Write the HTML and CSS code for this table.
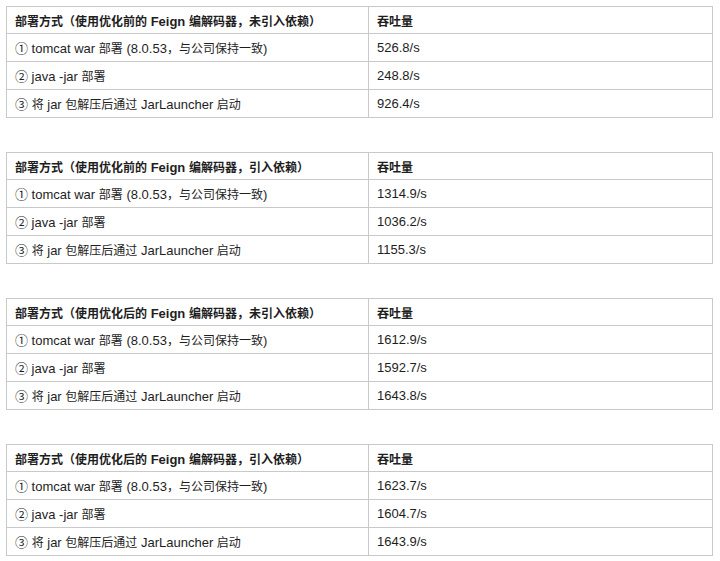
FILE: index.html
```html
<!DOCTYPE html>
<html lang="zh">
<head>
<meta charset="utf-8">
<link rel="stylesheet" href="styles.css">
</head>
<body>
<div class="page">
  <table class="bench">
    <tr><th class="c1"><span class="zh">部署方式（使用优化前的</span> Feign <span class="zh">编解码器，未引入依赖）</span></th><th><span class="zh">吞吐量</span></th></tr>
    <tr><td class="c1">① tomcat war <span class="zh">部署</span> (8.0.53<span class="zh">，与公司保持一致</span>)</td><td>526.8/s</td></tr>
    <tr><td class="c1">② java -jar <span class="zh">部署</span></td><td>248.8/s</td></tr>
    <tr><td class="c1">③ <span class="zh">将</span> jar <span class="zh">包解压后通过</span> JarLauncher <span class="zh">启动</span></td><td>926.4/s</td></tr>
  </table>
  <table class="bench">
    <tr><th class="c1"><span class="zh">部署方式（使用优化前的</span> Feign <span class="zh">编解码器，引入依赖）</span></th><th><span class="zh">吞吐量</span></th></tr>
    <tr><td class="c1">① tomcat war <span class="zh">部署</span> (8.0.53<span class="zh">，与公司保持一致</span>)</td><td>1314.9/s</td></tr>
    <tr><td class="c1">② java -jar <span class="zh">部署</span></td><td>1036.2/s</td></tr>
    <tr><td class="c1">③ <span class="zh">将</span> jar <span class="zh">包解压后通过</span> JarLauncher <span class="zh">启动</span></td><td>1155.3/s</td></tr>
  </table>
  <table class="bench">
    <tr><th class="c1"><span class="zh">部署方式（使用优化后的</span> Feign <span class="zh">编解码器，未引入依赖）</span></th><th><span class="zh">吞吐量</span></th></tr>
    <tr><td class="c1">① tomcat war <span class="zh">部署</span> (8.0.53<span class="zh">，与公司保持一致</span>)</td><td>1612.9/s</td></tr>
    <tr><td class="c1">② java -jar <span class="zh">部署</span></td><td>1592.7/s</td></tr>
    <tr><td class="c1">③ <span class="zh">将</span> jar <span class="zh">包解压后通过</span> JarLauncher <span class="zh">启动</span></td><td>1643.8/s</td></tr>
  </table>
  <table class="bench">
    <tr><th class="c1"><span class="zh">部署方式（使用优化后的</span> Feign <span class="zh">编解码器，引入依赖）</span></th><th><span class="zh">吞吐量</span></th></tr>
    <tr><td class="c1">① tomcat war <span class="zh">部署</span> (8.0.53<span class="zh">，与公司保持一致</span>)</td><td>1623.7/s</td></tr>
    <tr><td class="c1">② java -jar <span class="zh">部署</span></td><td>1604.7/s</td></tr>
    <tr><td class="c1">③ <span class="zh">将</span> jar <span class="zh">包解压后通过</span> JarLauncher <span class="zh">启动</span></td><td>1643.9/s</td></tr>
  </table>
</div>
</body>
</html>
```

FILE: styles.css
```css
html, body {
  margin: 0;
  padding: 0;
  background: #ffffff;
}
.page {
  padding: 6px 0 0 6px;
  display: flex;
  flex-direction: column;
  gap: 34px;
  font-family: "Liberation Sans", "Noto Sans CJK SC", sans-serif;
  font-size: 13px;
  color: #1e1e1e;
}
.bench {
  border-collapse: collapse;
  width: 707px;
  table-layout: fixed;
}
.bench th,
.bench td {
  border: 1px solid #c9c9c9;
  height: 27px;
  padding: 0 8px;
  text-align: left;
  vertical-align: middle;
  white-space: nowrap;
}
.bench th {
  font-weight: bold;
  height: 26px;
}
.bench .c1 {
  width: 345px;
}
.zh {
  font-family: "Noto Sans CJK SC", sans-serif;
  font-size: 12px;
}
```
